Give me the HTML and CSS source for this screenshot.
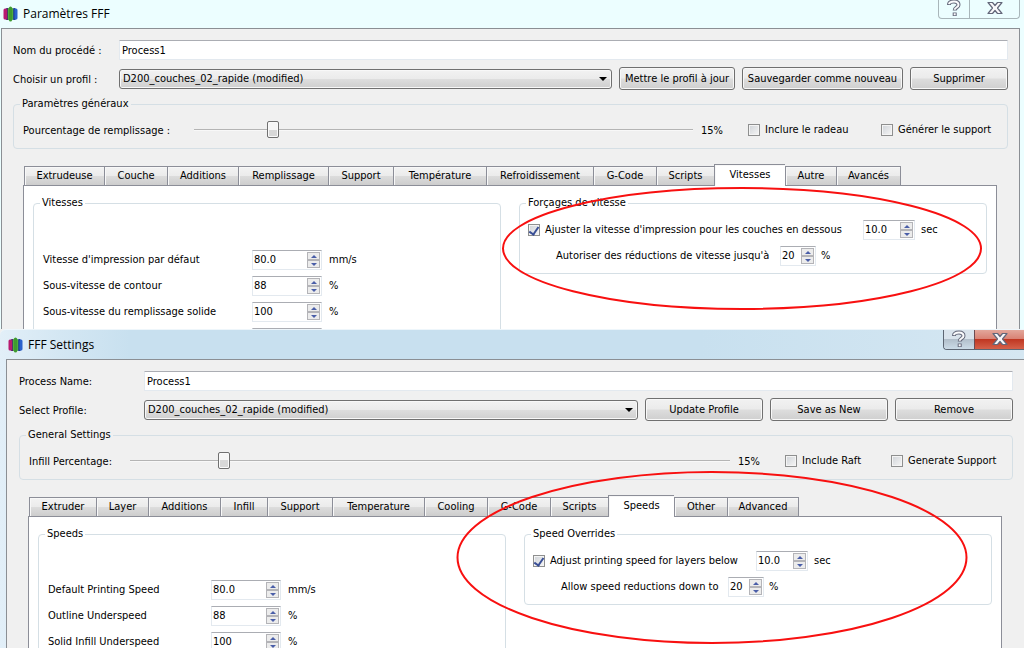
FILE: index.html
```
<!DOCTYPE html>
<html lang="fr">
<head>
<meta charset="utf-8">
<title>Paramètres FFF / FFF Settings</title>
<link rel="stylesheet" href="styles.css">
</head>
<body>
<svg class="defs" aria-hidden="true">
  <defs>
    <symbol id="logo" viewBox="0 0 15 16">
      <rect x="2.5" y="2" width="3.500" height="12" rx="1.5" fill="#4b1c72"/>
      <rect x="0.5" y="2.500" width="3.500" height="11" rx="1.5" fill="#b81a70"/>
      <rect x="9.5" y="2" width="3.5" height="12" rx="1.5" fill="#1c3f94"/>
      <rect x="11.5" y="2.500" width="3" height="11" rx="1.5" fill="#2a62cc"/>
      <rect x="4.8" y="1.5" width="5.4" height="13" rx="2" fill="#4fae3c"/>
      <rect x="6" y="0.5" width="3" height="15" rx="1.5" fill="#3f9a30"/>
    </symbol>
    <symbol id="help" viewBox="0 0 14 18">
      <path d="M2 6C2 3 4 2.500 7 2.500s4.500 1 4.500 3.500c0 2.500-3.800 2.500-3.800 5.500M7.700 13.500v3.500" fill="none" stroke="#666a7c" stroke-width="4"/>
      <path d="M2 5.200C2.300 3 4 2.500 7 2.500s4.500 1 4.500 3.500c0 2.500-3.800 2.500-3.800 4.700M7.700 14.300v1.900" fill="none" stroke="#fafafc" stroke-width="2"/>
    </symbol>
    <symbol id="close" viewBox="0 0 16 14">
      <path d="M1 1.500h4.500L8 4.500l2.500-3H15L10.500 7l4.500 5.500h-4.500L8 9.500l-2.500 3H1L5.500 7z" fill="#f8f8fa" stroke="#63677a" stroke-width="1.200" stroke-linejoin="round"/>
    </symbol>
  </defs>
</svg>

<main class="desktop">
  <section class="window window-fr" lang="fr">
    <header class="titlebar">
      <svg class="logo"><use href="#logo"/></svg>
      <h1 class="title">Paramètres FFF</h1>
      <div class="caption-buttons">
        <button class="caption help" aria-label="Aide"><svg width="14" height="18"><use href="#help"/></svg></button>
        <button class="caption close" aria-label="Fermer"><svg width="16" height="14"><use href="#close"/></svg></button>
      </div>
    </header>
    <div class="client">
      <div class="row name-row">
        <label class="row-label" for="fr-name">Nom du procédé :</label>
        <input class="text" id="fr-name" type="text" value="Process1">
      </div>
      <div class="row profile-row">
        <label class="row-label" for="fr-profile">Choisir un profil :</label>
        <span class="combo"><select id="fr-profile"><option>D200_couches_02_rapide (modified)</option></select></span>
        <button class="push update">Mettre le profil à jour</button>
        <button class="push save">Sauvegarder comme nouveau</button>
        <button class="push remove">Supprimer</button>
      </div>
      <fieldset class="group general">
        <legend>Paramètres généraux</legend>
        <div class="general-row">
          <label class="infill-label" for="fr-infill">Pourcentage de remplissage :</label>
          <input class="slider" id="fr-infill" type="range" min="0" max="100" value="15">
          <output class="percent" for="fr-infill">15%</output>
          <label class="check raft"><input type="checkbox">Inclure le radeau</label>
          <label class="check support"><input type="checkbox">Générer le support</label>
        </div>
      </fieldset>
      <div class="tabs" role="tablist">
        <button class="tab" role="tab">Extrudeuse</button>
        <button class="tab" role="tab">Couche</button>
        <button class="tab" role="tab">Additions</button>
        <button class="tab" role="tab">Remplissage</button>
        <button class="tab" role="tab">Support</button>
        <button class="tab" role="tab">Température</button>
        <button class="tab" role="tab">Refroidissement</button>
        <button class="tab" role="tab">G-Code</button>
        <button class="tab" role="tab">Scripts</button>
        <button class="tab active" role="tab" aria-selected="true">Vitesses</button>
        <button class="tab" role="tab">Autre</button>
        <button class="tab" role="tab">Avancés</button>
      </div>
      <div class="pane" role="tabpanel">
        <fieldset class="group speeds">
          <legend>Vitesses</legend>
          <div class="speed-rows">
            <div class="speed-row"><label for="fr-s1">Vitesse d'impression par défaut</label><span class="spin"><input id="fr-s1" type="text" value="80.0"><span class="steps"><button class="up" aria-label="Plus"></button><button class="down" aria-label="Moins"></button></span></span><span>mm/s</span></div>
            <div class="speed-row"><label for="fr-s2">Sous-vitesse de contour</label><span class="spin"><input id="fr-s2" type="text" value="88"><span class="steps"><button class="up" aria-label="Plus"></button><button class="down" aria-label="Moins"></button></span></span><span>%</span></div>
            <div class="speed-row"><label for="fr-s3">Sous-vitesse du remplissage solide</label><span class="spin"><input id="fr-s3" type="text" value="100"><span class="steps"><button class="up" aria-label="Plus"></button><button class="down" aria-label="Moins"></button></span></span><span>%</span></div>
            <div class="speed-row"><label for="fr-s4"></label><span class="spin"><input id="fr-s4" type="text"><span class="steps"><button class="up" aria-label="Plus"></button><button class="down" aria-label="Moins"></button></span></span></div>
          </div>
        </fieldset>
        <fieldset class="group overrides">
          <legend>Forçages de vitesse</legend>
          <div class="override-row">
            <label class="check"><input type="checkbox" checked>Ajuster la vitesse d'impression pour les couches en dessous</label>
            <span class="spin medium"><input type="text" value="10.0" aria-label="Secondes"><span class="steps"><button class="up" aria-label="Plus"></button><button class="down" aria-label="Moins"></button></span></span><span>sec</span>
          </div>
          <div class="override-row indent">
            <label class="reduction" for="fr-red">Autoriser des réductions de vitesse jusqu'à</label>
            <span class="spin small"><input id="fr-red" type="text" value="20"><span class="steps"><button class="up" aria-label="Plus"></button><button class="down" aria-label="Moins"></button></span></span><span>%</span>
          </div>
        </fieldset>
      </div>
    </div>
  </section>

  <section class="window window-en" lang="en">
    <header class="titlebar">
      <svg class="logo"><use href="#logo"/></svg>
      <h1 class="title">FFF Settings</h1>
      <div class="caption-buttons">
        <button class="caption help" aria-label="Help"><svg width="14" height="18"><use href="#help"/></svg></button>
        <button class="caption close" aria-label="Close"><svg width="16" height="14"><use href="#close"/></svg></button>
      </div>
    </header>
    <div class="client">
      <div class="row name-row">
        <label class="row-label" for="en-name">Process Name:</label>
        <input class="text" id="en-name" type="text" value="Process1">
      </div>
      <div class="row profile-row">
        <label class="row-label" for="en-profile">Select Profile:</label>
        <span class="combo"><select id="en-profile"><option>D200_couches_02_rapide (modified)</option></select></span>
        <button class="push">Update Profile</button>
        <button class="push">Save as New</button>
        <button class="push">Remove</button>
      </div>
      <fieldset class="group general">
        <legend>General Settings</legend>
        <div class="general-row">
          <label class="infill-label" for="en-infill">Infill Percentage:</label>
          <input class="slider" id="en-infill" type="range" min="0" max="100" value="15">
          <output class="percent" for="en-infill">15%</output>
          <label class="check raft"><input type="checkbox">Include Raft</label>
          <label class="check support"><input type="checkbox">Generate Support</label>
        </div>
      </fieldset>
      <div class="tabs" role="tablist">
        <button class="tab" role="tab">Extruder</button>
        <button class="tab" role="tab">Layer</button>
        <button class="tab" role="tab">Additions</button>
        <button class="tab" role="tab">Infill</button>
        <button class="tab" role="tab">Support</button>
        <button class="tab" role="tab">Temperature</button>
        <button class="tab" role="tab">Cooling</button>
        <button class="tab" role="tab">G-Code</button>
        <button class="tab" role="tab">Scripts</button>
        <button class="tab active" role="tab" aria-selected="true">Speeds</button>
        <button class="tab" role="tab">Other</button>
        <button class="tab" role="tab">Advanced</button>
      </div>
      <div class="pane" role="tabpanel">
        <fieldset class="group speeds">
          <legend>Speeds</legend>
          <div class="speed-rows">
            <div class="speed-row"><label for="en-s1">Default Printing Speed</label><span class="spin"><input id="en-s1" type="text" value="80.0"><span class="steps"><button class="up" aria-label="More"></button><button class="down" aria-label="Less"></button></span></span><span>mm/s</span></div>
            <div class="speed-row"><label for="en-s2">Outline Underspeed</label><span class="spin"><input id="en-s2" type="text" value="88"><span class="steps"><button class="up" aria-label="More"></button><button class="down" aria-label="Less"></button></span></span><span>%</span></div>
            <div class="speed-row"><label for="en-s3">Solid Infill Underspeed</label><span class="spin"><input id="en-s3" type="text" value="100"><span class="steps"><button class="up" aria-label="More"></button><button class="down" aria-label="Less"></button></span></span><span>%</span></div>
          </div>
        </fieldset>
        <fieldset class="group overrides">
          <legend>Speed Overrides</legend>
          <div class="override-row">
            <label class="check"><input type="checkbox" checked>Adjust printing speed for layers below</label>
            <span class="spin medium"><input type="text" value="10.0" aria-label="Seconds"><span class="steps"><button class="up" aria-label="More"></button><button class="down" aria-label="Less"></button></span></span><span>sec</span>
          </div>
          <div class="override-row indent">
            <label class="reduction" for="en-red">Allow speed reductions down to</label>
            <span class="spin small"><input id="en-red" type="text" value="20"><span class="steps"><button class="up" aria-label="More"></button><button class="down" aria-label="Less"></button></span></span><span>%</span>
          </div>
        </fieldset>
      </div>
    </div>
  </section>
</main>
<svg class="annotations" width="1024" height="648" aria-hidden="true">
  <ellipse cx="742" cy="248.500" rx="239" ry="60.500"/>
  <ellipse cx="712" cy="557.500" rx="254.500" ry="85.500"/>
</svg>
</body>
</html>
```
FILE: styles.css
```
* {
  box-sizing: border-box;
}

body {
  margin: 0;
  overflow: hidden;
  background: #f0f0f0;
  color: #000;
  font: 11px/14px "DejaVu Sans Condensed", "DejaVu Sans", sans-serif;
}

button,
input,
select {
  margin: 0;
  padding: 0;
  color: inherit;
  font: inherit;
}

label,
span,
legend,
button {
  white-space: nowrap;
}

.defs {
  position: absolute;
  width: 0;
  height: 0;
}

.annotations {
  position: absolute;
  top: 0;
  left: 0;
  fill: none;
  stroke: #f81010;
  stroke-width: 2;
  pointer-events: none;
}

.desktop {
  display: grid;
  grid-template-rows: 329px 1fr;
  height: 100vh;
}

/* Window frames */

.window {
  display: flex;
  flex-direction: column;
  min-height: 0;
  overflow: hidden;
}

.window-fr {
  padding: 0 4px 0 1px;
  background: #ecfeff;
}

.window-en {
  padding-left: 6px;
  background: linear-gradient(90deg, #e2eff8 0, #d4e7f3 60px, #c8e0ef 130px, #c8e0ef 700px, #d5e7f2 1024px);
  border-top: 1px solid #eef6fb;
  border-radius: 6px 0 0 0;
}

.titlebar {
  display: flex;
  flex: none;
  align-items: center;
  height: 28px;
}

.window-en .titlebar {
  height: 29px;
}

.logo {
  width: 15px;
  height: 16px;
  margin: 0 5px 0 2px;
}

.title {
  flex: 1;
  margin: 0;
  font: 12px/16px "Open Sans", "Noto Sans", sans-serif;
}

.caption-buttons {
  display: flex;
  align-self: flex-start;
  height: 19px;
  border: 1px solid #a9b6ba;
  border-top: 0;
  border-radius: 0 0 4px 4px;
  overflow: hidden;
}

.window-en .caption-buttons {
  height: 20px;
  border-color: #5d6673;
  border-right: 0;
  border-radius: 0 0 0 4px;
}

.caption {
  display: flex;
  align-items: center;
  justify-content: center;
  padding-bottom: 2px;
  border: 0;
  background: none;
}

.help {
  width: 31px;
  border-right: 1px solid #a9b6ba;
}

.close {
  width: 49px;
}

.window-en .help {
  border-right-color: #6d4a50;
  background: linear-gradient(#d9e3ec 0 45%, #b2bfcb 50%, #cbdbe7);
}

.window-en .close {
  background: linear-gradient(#e3a79b 0, #d98375 45%, #c03722 50%, #d5614a);
}

.client {
  display: flex;
  flex: 1;
  flex-direction: column;
  min-height: 0;
  padding: 11px 11px 0;
  background: #f0f0f0;
  border: 1px solid #8b8f94;
  border-bottom: 0;
}

.window-en .client {
  padding-left: 12px;
  border-right: 0;
}

/* Form rows */

.row {
  display: flex;
  flex: none;
  align-items: center;
  gap: 7px;
  margin-bottom: 7px;
}

.row-label {
  flex: none;
  width: 99px;
  padding-top: 2px;
}

.window-en .row-label {
  width: 118px;
}

.text {
  flex: 1;
  height: 20px;
  padding: 0 2px;
  background: #fff;
  border: 1px solid #e3e9ef;
  border-top-color: #abadb3;
  border-radius: 1px;
}

.combo {
  display: flex;
  position: relative;
  flex: 1;
}

.combo::after {
  content: "";
  position: absolute;
  top: 8px;
  right: 5px;
  border: 4px solid transparent;
  border-top-color: #000;
  border-bottom: 0;
  pointer-events: none;
}

.combo select,
.push {
  background: linear-gradient(#f2f2f2 0, #ebebeb 48%, #dddddd 52%, #cfcfcf);
  border: 1px solid #707070;
  border-radius: 3px;
  box-shadow: inset 0 0 0 1px #f8f8f8;
}

.combo select {
  width: 100%;
  height: 20px;
  padding: 0 3px;
  appearance: none;
}

.push {
  width: 118px;
  height: 23px;
  text-align: center;
}

.push.update {
  width: 116px;
}

.push.save {
  width: 161px;
}

.push.remove {
  width: 98px;
}

/* Group boxes */

.group {
  min-width: 0;
  margin: 0;
  padding: 0;
  border: 1px solid #d5dfe5;
  border-radius: 4px;
}

.group legend {
  height: 14px;
  margin-left: 6px;
  padding: 0 2px;
}

.general {
  flex: none;
}

.general-row {
  display: flex;
  align-items: center;
  height: 37px;
  padding: 0 13px 0 9px;
}

.infill-label {
  width: 171px;
  padding-top: 2px;
}

.window-en .infill-label {
  width: 101px;
}

.percent {
  width: 47px;
  padding-top: 2px;
  padding-left: 8px;
}

.raft {
  width: 133px;
  margin-left: 8px;
}

.window-en .raft {
  width: 106px;
}

.support {
  width: 113px;
}

.window-en .support {
  width: 108px;
}

.slider {
  flex: 1;
  min-width: 0;
  height: 18px;
  background: none;
  appearance: none;
}

.slider::-webkit-slider-runnable-track {
  height: 2px;
  background: #b4b4b4;
  border-bottom: 1px solid #f8f8f8;
}

.slider::-webkit-slider-thumb {
  width: 12px;
  height: 17px;
  margin-top: -8px;
  background: linear-gradient(#f6f6f6 50%, #d8d8d8 50%);
  border: 1px solid #707070;
  border-radius: 2px;
  box-shadow: inset 0 0 0 1px #fafafa;
  appearance: none;
}

.check {
  display: flex;
  align-items: center;
  gap: 5px;
}

.check input {
  display: grid;
  flex: none;
  width: 12px;
  height: 12px;
  background: linear-gradient(135deg, #cfd3d8, #f6f6f6);
  border: 1px solid #8e8f8f;
  box-shadow: inset 0 0 0 1px #f4f4f4;
  appearance: none;
  place-items: center;
}

.check input:checked::after {
  content: "";
  width: 4px;
  height: 8px;
  margin-bottom: 2px;
  border: solid #3a4f96;
  border-width: 0 2px 2px 0;
  transform: rotate(35deg);
}

/* Tabs */

.tabs {
  display: grid;
  flex: none;
  grid-template-columns: 80px 63px 71px 90px 65px 93px 107px 63px 58px 71px 51px 65px;
  align-items: end;
  height: 21px;
  margin: 15px 11px 0;
}

.window-en .tabs {
  grid-template-columns: 67px 52px 72px 47px 65px 92px 63px 63px 58px 66px 53px 72px;
  margin-left: 10px;
}

.tab {
  height: 19px;
  background: linear-gradient(#f3f3f3 0, #ebebeb 50%, #dcdcdc 52%, #cdcdcd);
  border: solid #8c8e98;
  border-width: 1px 0 0 1px;
  box-shadow: inset 1px 1px 0 #f8f8f8;
}

.tab:last-child {
  border-right-width: 1px;
}

.tab.active {
  height: 22px;
  margin-bottom: -1px;
  padding-bottom: 2px;
  background: #fff;
  z-index: 1;
}

.pane {
  display: grid;
  flex: 1;
  grid-template-columns: 1fr 1fr;
  gap: 18px;
  min-height: 0;
  margin: 0 11px 0 10px;
  padding: 10px 9px 0;
  background: #fff;
  border: 1px solid #8c8e98;
  border-bottom: 0;
}

.window-en .pane {
  margin-left: 9px;
}

.speed-rows {
  display: flex;
  flex-direction: column;
  gap: 6px;
  padding: 40px 9px 0;
}

.window-en .speed-rows {
  padding-top: 39px;
}

.speed-row {
  display: flex;
  align-items: center;
  gap: 7px;
}

.speed-row label {
  width: 202px;
}

.window-en .speed-row label {
  width: 156px;
}

.overrides {
  align-self: start;
  padding: 10px 8px 7px;
}

.overrides legend {
  margin-left: -2px;
}

.override-row {
  display: flex;
  align-items: center;
  gap: 6px;
}

.override-row .check {
  width: 329px;
}

.override-row.indent {
  gap: 5px;
  margin-top: 6px;
  padding-left: 28px;
}

.reduction {
  width: 219px;
}

.window-en .override-row .check {
  width: 217px;
}

.window-en .reduction {
  width: 162px;
}

.spin {
  display: flex;
  width: 70px;
  height: 20px;
  padding: 1px 1px 1px 1px;
  background: #fff;
  border: 1px solid #e3e9ef;
  border-top-color: #abadb3;
}

.spin.medium {
  width: 52px;
}

.spin.small {
  width: 36px;
}

.spin input {
  flex: 1;
  min-width: 0;
  background: none;
  border: 0;
}

.steps {
  display: flex;
  flex-direction: column;
  width: 13px;
}

.steps button {
  display: flex;
  flex: 1;
  align-items: center;
  justify-content: center;
  min-height: 0;
  background: #ececec;
  border: 1px solid #b4b4b8;
}

.steps button::after {
  content: "";
  border: 3px solid transparent;
}

.steps .up::after {
  border-top: 0;
  border-bottom-color: #4a5ea8;
}

.steps .down::after {
  border-top-color: #4a5ea8;
  border-bottom: 0;
}
```
